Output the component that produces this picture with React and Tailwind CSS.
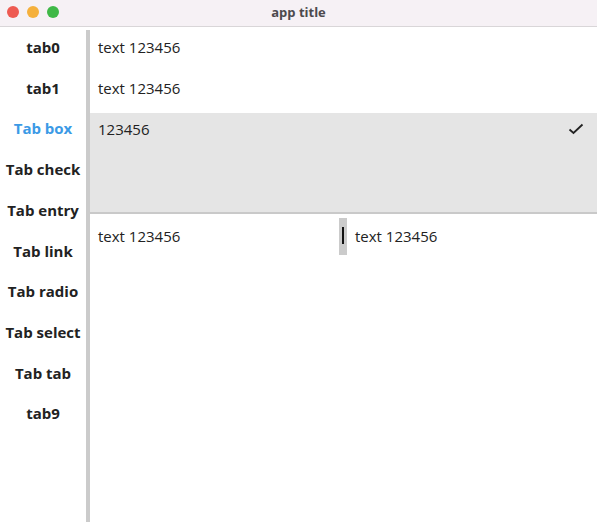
import React from 'react';

const tabs = ['tab0', 'tab1', 'Tab box', 'Tab check', 'Tab entry', 'Tab link', 'Tab radio', 'Tab select', 'Tab tab', 'tab9'];

const App = () => {
  const active = 2;

  return (
    <div className="w-[597px] h-[526px] bg-white flex flex-col overflow-hidden" style={{ fontFamily: '"Open Sans", "Noto Sans", sans-serif' }}>
      {/* Title bar */}
      <div className="relative h-[27px] shrink-0 bg-[#f6f1f5] border-b border-[#d9d6d8] flex items-center justify-center">
        <div className="absolute left-[7px] top-[6px] flex gap-[8px]">
          <span className="w-[12px] h-[12px] rounded-full bg-[#ee5a52]" />
          <span className="w-[12px] h-[12px] rounded-full bg-[#f5b03c]" />
          <span className="w-[12px] h-[12px] rounded-full bg-[#3fb847]" />
        </div>
        <span className="text-[13px] font-bold text-[#4d4a4d]">app title</span>
      </div>

      {/* Body */}
      <div className="flex flex-1 min-h-0">
        {/* Sidebar */}
        <div className="w-[86px] shrink-0 flex flex-col">
          {tabs.map((t, i) => (
            <div
              key={t}
              className={`h-[40.7px] flex items-center justify-center text-[15px] font-bold ${i === active ? 'text-[#3b9ae6]' : 'text-[#222]'}`}
            >
              {t}
            </div>
          ))}
        </div>
        <div className="w-[4px] shrink-0 bg-[#cbcbcb] mt-[3px] mb-[4px]" />

        {/* Content */}
        <div className="flex-1 flex flex-col text-[15px] text-[#222]">
          <div className="h-[41px] flex items-center px-[8px]">text 123456</div>
          <div className="h-[41px] flex items-center px-[8px]">text 123456</div>
          <div className="mt-[4px] h-[101px] bg-[#e5e5e5] border-b-2 border-[#c9c9c9] flex items-start justify-between px-[8px] pt-[5px]">
            <span>123456</span>
            <svg width="16" height="12" viewBox="0 0 16 12" className="mt-[5px] mr-[5px]">
              <path d="M1.5 6.5 L5.5 10 L14.5 1.5" fill="none" stroke="#222" strokeWidth="1.8" />
            </svg>
          </div>
          <div className="flex items-start">
            <div className="w-[249px] h-[45px] flex items-center px-[8px]">text 123456</div>
            <div className="mt-[4px] w-[8px] h-[37px] bg-[#cbcbcb] flex justify-center pt-[9px]">
              <div className="w-[2px] h-[17px] bg-[#111]" />
            </div>
            <div className="h-[45px] flex items-center px-[8px]">text 123456</div>
          </div>
        </div>
      </div>
    </div>
  );
};

export default App;
